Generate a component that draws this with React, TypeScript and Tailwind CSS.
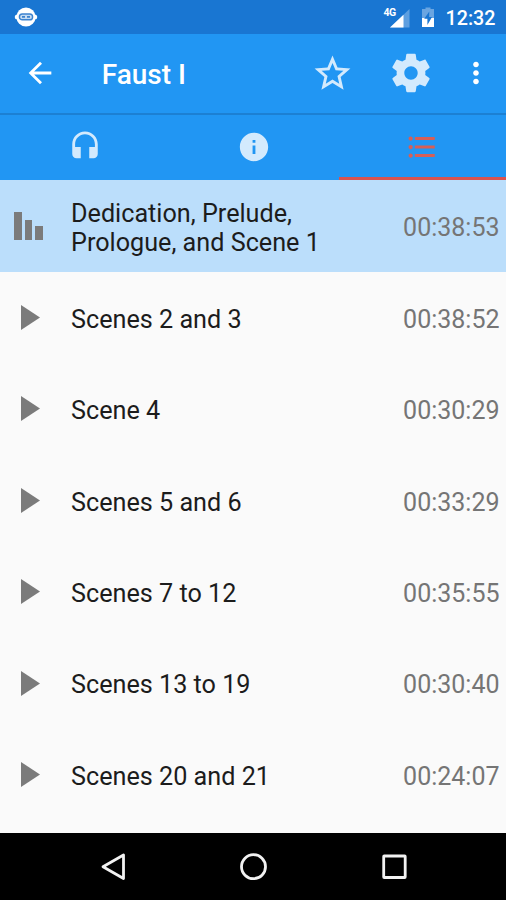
import type { ReactNode } from 'react';

const chapters = [
  { title: 'Dedication, Prelude, Prologue, and Scene 1', time: '00:38:53', active: true },
  { title: 'Scenes 2 and 3', time: '00:38:52' },
  { title: 'Scene 4', time: '00:30:29' },
  { title: 'Scenes 5 and 6', time: '00:33:29' },
  { title: 'Scenes 7 to 12', time: '00:35:55' },
  { title: 'Scenes 13 to 19', time: '00:30:40' },
  { title: 'Scenes 20 and 21', time: '00:24:07' },
];

function Icon({ className, children }: { className: string; children: ReactNode }) {
  return (
    <svg viewBox="0 0 24 24" fill="currentColor" className={`block shrink-0 ${className}`}>
      {children}
    </svg>
  );
}

function StatusBar() {
  return (
    <div className="flex h-[33.7px] shrink-0 items-center bg-[#1976d2] pr-[10.5px] pl-[14px] text-white">
      <svg viewBox="0 0 24 22" className="mt-px h-[22px] w-6">
        <circle cx="12" cy="11" r="9.6" fill="white" />
        <rect x="0.8" y="8.5" width="22.4" height="5" rx="2.5" fill="white" />
        <rect x="5.4" y="8" width="13.2" height="5.8" rx="2.9" fill="#c4dbf2" stroke="#3d83cf" strokeWidth="1.4" />
        <path d="M8 10.9h3M13 10.9h3" stroke="#3d83cf" strokeWidth="1.6" />
      </svg>
      <div className="flex-1" />
      <div className="relative mr-[11.5px] h-[22px] w-[26px]">
        <svg viewBox="0 0 26 22" className="mt-px h-[22px] w-[26px]">
          <path d="M6 20.500 25.500 2v18.500z" fill="#5e9fe0" />
          <path d="M6 20.500 19.500 7.700v12.800z" fill="white" />
        </svg>
        <span className="absolute top-[2px] left-0 bg-[#1976d2] pr-px text-[10.5px] leading-[9px] font-bold tracking-[-0.5px]">4G</span>
      </div>
      <svg viewBox="0 0 14 22" className="mt-px mr-[10.5px] h-[22px] w-[14px]">
        <path d="M4.5 1.500h5V3H13v18H1V3h3.500z" fill="#6aa5e1" />
        <path d="M1 12h12v9H1z" fill="white" />
        <path d="M8.300 5.500 3.200 12.700h3.200V19L11 11H8.100z" fill="#1976d2" />
      </svg>
      <span className="mt-[4px] text-[19.7px] leading-6 font-medium">12:32</span>
    </div>
  );
}

function Toolbar() {
  return (
    <div className="flex h-[81.3px] shrink-0 items-center border-b-2 border-[#1c80d3] bg-[#2196f3]">
      <Icon className="ml-[22.500px] h-[34px] w-[34px] text-white">
        <path d="M20 11H7.830l5.590-5.590L12 4l-8 8 8 8 1.410-1.410L7.830 13H20v-2z" />
      </Icon>
      <h1 className="mt-[3px] ml-[45.2px] flex-1 text-[28px] leading-8 font-medium text-white">Faust I</h1>
      <Icon className="h-[43px] w-[43px] text-[#d3eafd]">
        <path d="M22 9.24l-7.19-.62L12 2 9.19 8.63 2 9.24l5.46 4.73L5.82 21 12 17.27 18.18 21l-1.63-7.03L22 9.24zM12 15.4l-3.76 2.27 1-4.28-3.32-2.88 4.38-.38L12 6.1l1.71 4.04 4.38.38-3.32 2.88 1 4.28L12 15.4z" />
      </Icon>
      <Icon className="ml-[34px] h-[46px] w-[46px] text-[#d3eafd]">
        <path d="M19.43 12.98c.04-.32.07-.64.07-.98s-.03-.66-.07-.98l2.11-1.65c.19-.15.24-.42.12-.64l-2-3.46c-.12-.22-.39-.3-.61-.22l-2.49 1c-.52-.4-1.08-.73-1.69-.98l-.38-2.65C14.46 2.18 14.25 2 14 2h-4c-.25 0-.46.18-.49.42l-.38 2.65c-.61.25-1.17.59-1.69.98l-2.49-1c-.23-.09-.49 0-.61.22l-2 3.46c-.13.22-.07.49.12.64l2.11 1.65c-.04.32-.07.65-.07.98s.03.66.07.98l-2.11 1.65c-.19.15-.24.42-.12.64l2 3.46c.12.22.39.3.61.22l2.49-1c.52.4 1.08.73 1.69.98l.38 2.65c.03.24.24.42.49.42h4c.25 0 .46-.18.49-.42l.38-2.65c.61-.25 1.17-.59 1.69-.98l2.49 1c.23.09.49 0 .61-.22l2-3.46c.12-.22.07-.49-.12-.64l-2.11-1.65zM12 15.5c-1.93 0-3.5-1.57-3.5-3.5s1.57-3.5 3.5-3.5 3.5 1.57 3.5 3.5-1.57 3.5-3.5 3.5z" />
      </Icon>
      <Icon className="mr-[13px] ml-[25px] h-[34px] w-[34px] text-white">
        <path d="M12 8c1.1 0 2-.9 2-2s-.9-2-2-2-2 .9-2 2 .9 2 2 2zm0 2c-1.1 0-2 .9-2 2s.9 2 2 2 2-.9 2-2-.9-2-2-2zm0 6c-1.1 0-2 .9-2 2s.9 2 2 2 2-.9 2-2-.9-2-2-2z" />
      </Icon>
    </div>
  );
}

function Tabs() {
  return (
    <div className="grid h-[65.5px] shrink-0 grid-cols-[169px_169.500px_1fr] bg-[#2196f3] text-[#d3eafd]">
      <div className="flex items-center justify-center pb-[2px] pl-px">
        <Icon className="h-[34px] w-[34px]">
          <path d="M12 1c-4.97 0-9 4.03-9 9v7c0 1.66 1.34 3 3 3h3v-8H5v-2c0-3.87 3.13-7 7-7s7 3.13 7 7v2h-4v8h3c1.66 0 3-1.34 3-3v-7c0-4.97-4.03-9-9-9z" />
        </Icon>
      </div>
      <div className="flex items-center justify-center pb-[2px]">
        <Icon className="h-[34px] w-[34px]">
          <path d="M12 2C6.48 2 2 6.48 2 12s4.48 10 10 10 10-4.48 10-10S17.52 2 12 2zm1 15h-2v-6h2v6zm0-8h-2V7h2v2z" />
        </Icon>
      </div>
      <div className="flex items-center justify-center border-b-[3px] border-[#d9534f] pt-px text-[#d65f57]">
        <Icon className="h-[34px] w-[34px]">
          <path d="M4 10.5c-.83 0-1.500.67-1.500 1.500s.67 1.500 1.500 1.500 1.500-.67 1.500-1.500-.67-1.500-1.500-1.500zm0-6c-.83 0-1.500.67-1.500 1.500S3.170 7.500 4 7.500 5.500 6.830 5.500 6 4.830 4.500 4 4.500zm0 12c-.83 0-1.500.68-1.500 1.500s.68 1.500 1.500 1.500 1.500-.68 1.500-1.500-.67-1.500-1.500-1.500zM7 19h14v-2H7v2zm0-6h14v-2H7v2zm0-8v2h14V5H7z" />
        </Icon>
      </div>
    </div>
  );
}

function ChapterRow({ title, time, active }: { title: string; time: string; active?: boolean }) {
  return (
    <li className={`flex h-[91.4px] shrink-0 items-center pr-[6.500px] ${active ? 'bg-[#bbdefb]' : ''}`}>
      <div className="w-[71px] shrink-0 pl-[14px] text-[#7b7b7b]">
        {active ? (
          <div className="flex h-7 items-end gap-[3px]">
            <span className="h-7 w-[7.6px] bg-current" />
            <span className="h-5 w-[7.6px] bg-current" />
            <span className="h-[14px] w-[7.6px] bg-current" />
          </div>
        ) : (
          <svg viewBox="0 0 19 25" className="ml-[7px] h-[25px] w-[19px]" fill="currentColor">
            <path d="M0 0v25l19-12.500z" />
          </svg>
        )}
      </div>
      <span className="mt-[4px] w-[260px] text-[25.2px] leading-[29.6px] text-[#1c1c1c]">{title}</span>
      <span className="mt-[4px] ml-auto text-[25px] leading-[29.6px] text-[#757575]">{time}</span>
    </li>
  );
}

export default function App() {
  return (
    <div className="flex h-[900px] w-[506px] flex-col overflow-hidden bg-[#fafafa] font-[Roboto,sans-serif]">
      <StatusBar />
      <Toolbar />
      <Tabs />
      <ul className="flex flex-1 flex-col overflow-hidden">
        {chapters.map((c) => (
          <ChapterRow key={c.title} {...c} />
        ))}
      </ul>
      <div className="flex h-[67px] shrink-0 items-center bg-black">
        <svg viewBox="0 0 506 67" className="h-[67px] w-full" fill="none" stroke="#f2f2f2" strokeWidth="2.8">
          <path d="M123.500 22v23.500L103 33.700z" strokeLinejoin="round" />
          <circle cx="253.500" cy="33.700" r="12" />
          <rect x="383.700" y="23" width="21.500" height="21.500" rx=".5" />
        </svg>
      </div>
    </div>
  );
}
